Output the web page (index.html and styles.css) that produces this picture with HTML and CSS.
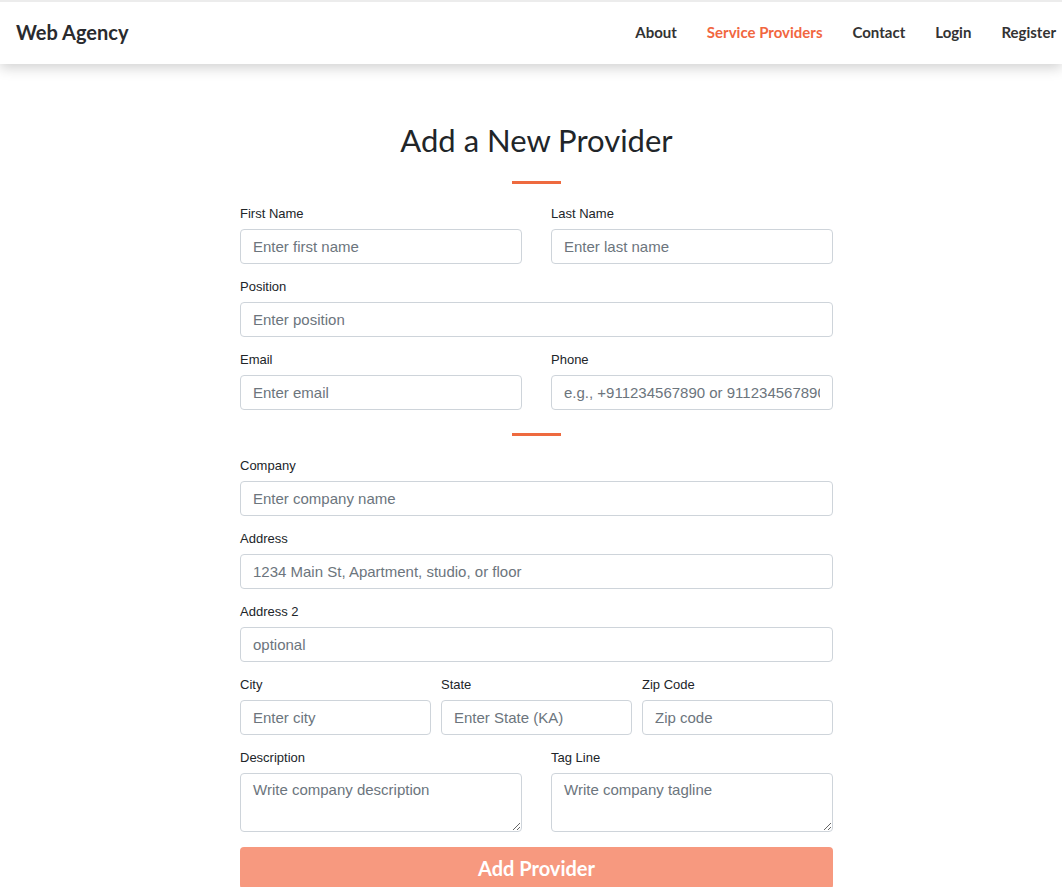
FILE: index.html
```html
<!DOCTYPE html>
<html lang="en">
<head>
<meta charset="utf-8">
<title>Add a New Provider</title>
<link rel="stylesheet" href="styles.css">
</head>
<body>
<header class="navbar">
  <a class="brand" href="#">Web Agency</a>
  <nav class="nav-links">
    <a href="#">About</a>
    <a href="#" class="active">Service Providers</a>
    <a href="#">Contact</a>
    <a href="#">Login</a>
    <a href="#">Register</a>
  </nav>
</header>
<main class="page">
  <form class="provider-form">
    <h1 class="title">Add a New Provider</h1>
    <div class="divider"></div>
    <div class="row two">
      <div class="field"><label>First Name</label><input type="text" placeholder="Enter first name"></div>
      <div class="field"><label>Last Name</label><input type="text" placeholder="Enter last name"></div>
    </div>
    <div class="row">
      <div class="field"><label>Position</label><input type="text" placeholder="Enter position"></div>
    </div>
    <div class="row two">
      <div class="field"><label>Email</label><input type="text" placeholder="Enter email"></div>
      <div class="field"><label>Phone</label><input type="text" placeholder="e.g., +911234567890 or 911234567890"></div>
    </div>
    <div class="divider small"></div>
    <div class="row">
      <div class="field"><label>Company</label><input type="text" placeholder="Enter company name"></div>
    </div>
    <div class="row">
      <div class="field"><label>Address</label><input type="text" placeholder="1234 Main St, Apartment, studio, or floor"></div>
    </div>
    <div class="row">
      <div class="field"><label>Address 2</label><input type="text" placeholder="optional"></div>
    </div>
    <div class="row three">
      <div class="field"><label>City</label><input type="text" placeholder="Enter city"></div>
      <div class="field"><label>State</label><input type="text" placeholder="Enter State (KA)"></div>
      <div class="field"><label>Zip Code</label><input type="text" placeholder="Zip code"></div>
    </div>
    <div class="row two">
      <div class="field"><label>Description</label><textarea placeholder="Write company description"></textarea></div>
      <div class="field"><label>Tag Line</label><textarea placeholder="Write company tagline"></textarea></div>
    </div>
    <button type="button" class="submit">Add Provider</button>
  </form>
</main>
</body>
</html>
```
FILE: styles.css
```css
* { box-sizing: border-box; }
html, body { margin: 0; padding: 0; }
body {
  background: #fff;
  font-family: "Liberation Sans", Arial, sans-serif;
  color: #212529;
  overflow: hidden;
}
.navbar {
  display: flex;
  align-items: center;
  justify-content: space-between;
  height: 64px;
  border-top: 2px solid #ececec;
  background: #fff;
  box-shadow: 0 4px 12px rgba(0,0,0,0.18);
  padding: 0 6px 2px 16px;
  position: relative;
  z-index: 2;
}
.brand {
  font-family: "Lato", "Open Sans", sans-serif;
  font-weight: 700;
  font-size: 20px;
  color: #2a2b2e;
  text-decoration: none;
}
.nav-links { display: flex; gap: 30px; }
.nav-links a {
  font-family: "Lato", "Open Sans", sans-serif;
  font-weight: 700;
  font-size: 15px;
  color: #333;
  text-decoration: none;
}
.nav-links a.active { color: #f1673f; }
.page {
  display: flex;
  justify-content: center;
  padding: 56px 0 0 11px;
}
.provider-form {
  width: 593px;
  display: flex;
  flex-direction: column;
}
.title {
  margin: 0;
  text-align: center;
  font-family: "Lato", "Open Sans", sans-serif;
  font-weight: 400;
  font-size: 31px;
  line-height: 40px;
  color: #212529;
}
.divider {
  width: 49px;
  height: 3px;
  background: #ee6a3f;
  margin: 21px auto 22px;
}
.divider.small { margin: 8px auto 22px; }
.row { display: grid; grid-template-columns: minmax(0, 1fr); margin-bottom: 15px; }
.row.two { grid-template-columns: minmax(0, 1fr) minmax(0, 1fr); column-gap: 29px; }
.row.three { grid-template-columns: minmax(0, 1fr) minmax(0, 1fr) minmax(0, 1fr); column-gap: 10px; }
.field { display: flex; flex-direction: column; min-width: 0; }
.field label {
  font-size: 13px;
  line-height: 16px;
  color: #212529;
  margin-bottom: 7px;
}
.field input, .field textarea {
  width: 100%;
  min-width: 0;
  font-family: "Liberation Sans", Arial, sans-serif;
  font-size: 15px;
  height: 35px;
  border: 1px solid #ced4da;
  border-radius: 4px;
  padding: 6px 12px;
  color: #495057;
  background: #fff;
  outline: none;
}
.field input::placeholder, .field textarea::placeholder { color: #6c757d; }
.field textarea { height: 59px; resize: vertical; padding-top: 7px; }
.submit {
  margin-top: 0;
  height: 42px;
  border: none;
  border-radius: 4px;
  background: #f7997f;
  color: #fff;
  font-family: "Lato", "Open Sans", sans-serif;
  font-weight: 700;
  font-size: 20px;
}
```
